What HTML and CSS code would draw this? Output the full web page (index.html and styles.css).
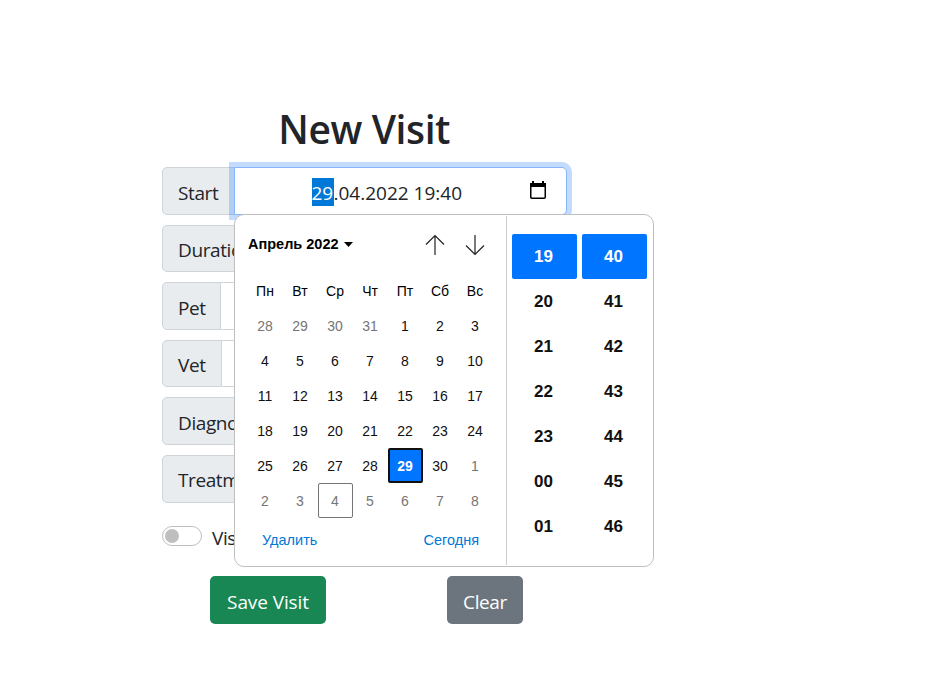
FILE: index.html
```html
<!DOCTYPE html>
<html lang="en">
<head>
<meta charset="utf-8">
<title>New Visit</title>
<link rel="stylesheet" href="styles.css">
</head>
<body>
<main class="form">
  <h1 class="title"><span>New Visit</span></h1>
  <div class="group start">
    <label class="label">Start</label>
    <div class="control focused">
      <div class="value"><span class="selected">29</span><span class="rest">.04.2022 19:40</span></div>
      <svg class="cal-icon" width="18" height="20" viewBox="0 0 18 20"><path d="M4 1v3M14 1v3" stroke="#000" stroke-width="2"/><rect x="1.75" y="3.75" width="14.5" height="14.5" rx="1" fill="none" stroke="#000" stroke-width="1.5"/><path d="M1 3h16v4H1z"/></svg>
    </div>
    <div class="picker">
      <section class="month">
        <header class="month-head">
          <span class="month-name">Апрель 2022</span>
          <svg class="caret" width="9" height="5" viewBox="0 0 9 5"><path d="M0 0h9L4.500 5z"/></svg>
          <svg class="arrow up" width="20" height="22" viewBox="0 0 20 22"><path d="M10 21V1.500M1 10.500l9-9 9 9" fill="none" stroke="#222" stroke-width="1.2"/></svg>
          <svg class="arrow" width="20" height="22" viewBox="0 0 20 22"><path d="M10 1v19.500M1 11.500l9 9 9-9" fill="none" stroke="#222" stroke-width="1.2"/></svg>
        </header>
        <div class="days">
          <b>Пн</b><b>Вт</b><b>Ср</b><b>Чт</b><b>Пт</b><b>Сб</b><b>Вс</b>
          <i>28</i><i>29</i><i>30</i><i>31</i><span>1</span><span>2</span><span>3</span>
          <span>4</span><span>5</span><span>6</span><span>7</span><span>8</span><span>9</span><span>10</span>
          <span>11</span><span>12</span><span>13</span><span>14</span><span>15</span><span>16</span><span>17</span>
          <span>18</span><span>19</span><span>20</span><span>21</span><span>22</span><span>23</span><span>24</span>
          <span>25</span><span>26</span><span>27</span><span>28</span><span class="picked">29</span><span>30</span><i>1</i>
          <i>2</i><i>3</i><i class="today">4</i><i>5</i><i>6</i><i>7</i><i>8</i>
        </div>
        <footer class="links"><a class="del">Удалить</a><a>Сегодня</a></footer>
      </section>
      <section class="time">
        <div class="col"><span class="on">19</span><span>20</span><span>21</span><span>22</span><span>23</span><span>00</span><span>01</span></div>
        <div class="col"><span class="on">40</span><span>41</span><span>42</span><span>43</span><span>44</span><span>45</span><span>46</span></div>
      </section>
    </div>
  </div>
  <div class="group"><label class="label duration">Duration</label><div class="control"></div></div>
  <div class="group"><label class="label pet">Pet</label><div class="control"></div></div>
  <div class="group"><label class="label vet">Vet</label><div class="control"></div></div>
  <div class="group"><label class="label diagnosis">Diagnosis</label><div class="control"></div></div>
  <div class="group"><label class="label treatment">Treatment</label><div class="control"></div></div>
  <div class="check"><span class="switch"></span><span class="check-text">Visit</span></div>
  <div class="actions"><button class="btn save"><span>Save Visit</span></button><button class="btn clear"><span>Clear</span></button></div>
</main>
</body>
</html>
```
FILE: styles.css
```css
* { box-sizing: border-box; }
body {
  margin: 0;
  height: 688px;
  overflow: hidden;
  background: #fff;
  color: #212529;
  font: 19px/30px "Open Sans", "Noto Sans", sans-serif;
  letter-spacing: -0.4px;
}
.form { width: 405.500px; margin-left: 161.500px; padding-top: 105px; }
.title {
  margin: 0 0 14px;
  font-size: 39px;
  line-height: 48px;
  font-weight: 600;
  letter-spacing: -0.4px;
  text-align: center;
}
.title span { white-space: nowrap; }
.group { position: relative; display: flex; height: 47.600px; margin-bottom: 10px; }
.label {
  flex: none;
  padding: 9.500px 0 0 15.500px;
  width: 73px;
  border: 1px solid #ced4da;
  border-radius: 5px 0 0 5px;
  background: #e9ecef;
  white-space: nowrap;
}
.pet { width: 59px; }
.vet { width: 60px; }
.duration { width: 108px; }
.diagnosis { width: 115px; }
.treatment { width: 122px; }
.control {
  flex: 1;
  margin-left: -1px;
  border: 1px solid #ced4da;
  border-radius: 0 5px 5px 0;
  background: #fff;
}
.focused {
  display: flex;
  align-items: center;
  padding: 2px 19.500px 0 77px;
  border-color: #86b7fe;
  box-shadow: 0 0 0 5px rgba(13, 110, 253, .25);
}
.value { display: flex; margin-top: 2px; line-height: 30px; letter-spacing: 0; white-space: nowrap; }
.selected { width: 22px; height: 28px; background: #0078d7; color: #fff; }
.cal-icon { margin: -3px 0 0 auto; }
.picker {
  position: absolute;
  z-index: 2;
  left: 72.500px;
  top: 47px;
  display: flex;
  width: 420px;
  height: 353px;
  border: 1px solid #bfbfbf;
  border-radius: 10px;
  background: #fff;
  color: #101010;
  font: 14px/37px "Liberation Sans", sans-serif;
  letter-spacing: 0;
}
.month { width: 272px; height: 349px; margin-top: 1px; padding: 8px 0 0 12px; border-right: 1px solid #ccc; }
.month-head { display: flex; align-items: center; height: 40px; color: #000; }
.month-name { margin-left: 1px; font-weight: 700; font-size: 14.500px; white-space: nowrap; }
.caret { margin-left: 5px; }
.arrow { margin: 2px 21px 0 0; }
.up { margin: 2px 20px 0 auto; }
.days { display: grid; grid-template-columns: repeat(7, 35px); grid-auto-rows: 35px; margin: 9px 0 0 1px; text-align: center; text-indent: -1px; }
.days b { font-weight: 400; color: #000; }
.days i { font-style: normal; color: #757575; }
.days .picked { border: 2px solid #101010; border-radius: 2px; background: #0075ff; color: #fff; font-weight: 700; line-height: 33px; }
.days .today { border: 1px solid #757575; border-radius: 2px; line-height: 35px; }
.links { display: flex; justify-content: space-between; padding: 4px 27px 0 15px; color: #0078d7; font-size: 14.500px; }
.time { display: flex; gap: 5px; padding: 19px 0 0 5px; }
.col { width: 65px; }
.col span { display: block; height: 45px; line-height: 45px; text-align: center; text-indent: -2px; font-size: 17px; font-weight: 700; }
.col .on { border-radius: 2px; background: #0075ff; color: #fff; }
.check { display: flex; height: 30px; margin-top: 13px; padding-top: 5px; }
.switch { width: 40px; height: 20px; margin-top: 5px; border: 1px solid #bfbfbf; border-radius: 10px; }
.switch::before { content: ""; display: block; width: 14px; height: 14px; margin: 2px; border-radius: 50%; background: #bfbfbf; }
.check-text { margin: 2px 0 0 10.500px; }
.actions { display: flex; gap: 121px; margin: 30px 0 0 48.500px; }
.btn {
  height: 48px;
  padding: 4px 0 0;
  border: 0;
  border-radius: 5px;
  color: #fff;
  font: inherit;
  letter-spacing: inherit;
}
.save { width: 116px; background: #198754; letter-spacing: -0.1px; }
.clear { width: 76px; background: #6c757d; }
```
